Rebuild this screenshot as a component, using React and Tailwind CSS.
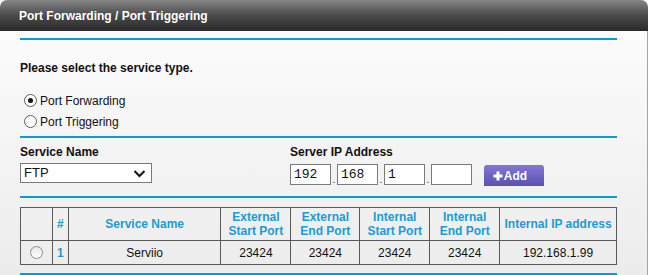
import React from 'react'

const cols = [
  { w: 'w-[32px]', label: '' },
  { w: 'w-[16px]', label: '#' },
  { w: 'w-[153px]', label: 'Service Name' },
  { w: 'w-[70px]', label: ['External', 'Start Port'] },
  { w: 'w-[69px]', label: ['External', 'End Port'] },
  { w: 'w-[70px]', label: ['Internal', 'Start Port'] },
  { w: 'w-[70px]', label: ['Internal', 'End Port'] },
  { w: 'w-[117px]', label: 'Internal IP address' },
]

function Radio({ checked }) {
  return (
    <span className="w-[13px] h-[13px] rounded-full border border-[#5c5c5c] bg-white flex items-center justify-center shrink-0">
      {checked && <span className="w-[5px] h-[5px] rounded-full bg-[#111]" />}
    </span>
  )
}

function Line() {
  return <div className="h-[2px] bg-[#0b9ad1]" />
}

function IpBox({ value }) {
  return (
    <div className="w-[41px] h-[21px] border border-[#7a7a7a] bg-white flex items-center px-[3px] text-[13px] text-[#111] font-['Liberation_Mono',monospace]">
      {value}
    </div>
  )
}

function Dot() {
  return <span className="w-[6px] self-end pb-[1px] text-center text-[10px] leading-[10px] text-[#333]">.</span>
}

export default function App() {
  return (
    <div className="w-[650px] h-[275px] bg-white overflow-hidden font-['Liberation_Sans',Arial,sans-serif] text-[12px] text-[#111]">
      <div className="w-[648px] h-full flex flex-col">
        {/* Title bar */}
        <div className="h-[31px] shrink-0 rounded-t-[7px] bg-gradient-to-b from-[#868686] via-[#4a4a4a] to-[#2b2b2b] flex items-center px-[19px]">
          <span className="text-white font-bold text-[12px]">Port Forwarding / Port Triggering</span>
        </div>

        {/* Body */}
        <div className="flex-1 border-r border-[#a4a4a4] bg-gradient-to-b from-[#fcfcfc] to-[#ececec] pt-[7px] pl-[20px] pr-[30px]">
          <Line />

          <div className="mt-[21px] font-bold leading-[14px]">Please select the service type.</div>

          <div className="mt-[15px] flex flex-col">
            <label className="h-[21px] flex items-center gap-[3px] pl-[4px]">
              <Radio checked />
              <span>Port Forwarding</span>
            </label>
            <label className="h-[21px] flex items-center gap-[3px] pl-[4px]">
              <Radio />
              <span>Port Triggering</span>
            </label>
          </div>

          <div className="mt-[4px]"><Line /></div>

          <div className="mt-[7px] flex">
            <div className="w-[270px] flex flex-col">
              <div className="font-bold leading-[14px]">Service Name</div>
              <div className="mt-[4px] w-[132px] h-[20px] border border-[#7a7a7a] bg-white flex items-center justify-between pl-[3px] pr-[5px] text-[13px]">
                <span>FTP</span>
                <svg width="13" height="9" viewBox="0 0 13 9">
                  <path d="M1.5 2 L6.5 7 L11.5 2" fill="none" stroke="#111" strokeWidth="2" />
                </svg>
              </div>
            </div>
            <div className="flex flex-col">
              <div className="font-bold leading-[14px]">Server IP Address</div>
              <div className="mt-[4px] flex items-center">
                <IpBox value="192" />
                <Dot />
                <IpBox value="168" />
                <Dot />
                <IpBox value="1" />
                <Dot />
                <IpBox value="" />
                <button className="ml-[12px] mt-[2px] w-[60px] h-[21px] rounded-t-[3px] bg-gradient-to-b from-[#8277d6] to-[#5c51ad] flex items-center justify-center gap-[1px] pr-[8px] text-white font-bold text-[12px]">
                  <svg width="10" height="10" viewBox="0 0 10 10">
                    <path d="M5 0.5 V9.5 M0.5 5 H9.5" stroke="#fff" strokeWidth="3" />
                  </svg>
                  <span>Add</span>
                </button>
              </div>
            </div>
          </div>

          <div className="mt-[10px]"><Line /></div>

          <table className="mt-[9px] border-collapse w-[597px]">
            <thead>
              <tr className="h-[33px]">
                {cols.map((c, i) => (
                  <th key={i} className={`${c.w} border border-[#5a5a5a] p-0 text-[#1b9bd7] font-bold text-[12px] leading-[14px] text-center`}>
                    {Array.isArray(c.label) ? (
                      <>
                        {c.label[0]}
                        <br />
                        {c.label[1]}
                      </>
                    ) : (
                      c.label
                    )}
                  </th>
                ))}
              </tr>
            </thead>
            <tbody>
              <tr className="h-[24px] text-center">
                <td className="border border-[#5a5a5a] p-0">
                  <div className="flex justify-center">
                    <span className="w-[13px] h-[13px] rounded-full border border-[#8a8a8a] bg-gradient-to-b from-[#e8e8e8] to-[#ffffff]" />
                  </div>
                </td>
                <td className="border border-[#5a5a5a] p-0 text-[#1b9bd7] font-bold">1</td>
                <td className="border border-[#5a5a5a] p-0">Serviio</td>
                <td className="border border-[#5a5a5a] p-0">23424</td>
                <td className="border border-[#5a5a5a] p-0">23424</td>
                <td className="border border-[#5a5a5a] p-0">23424</td>
                <td className="border border-[#5a5a5a] p-0">23424</td>
                <td className="border border-[#5a5a5a] p-0">192.168.1.99</td>
              </tr>
            </tbody>
          </table>

          <div className="mt-[8px]"><Line /></div>
        </div>
      </div>
    </div>
  )
}
